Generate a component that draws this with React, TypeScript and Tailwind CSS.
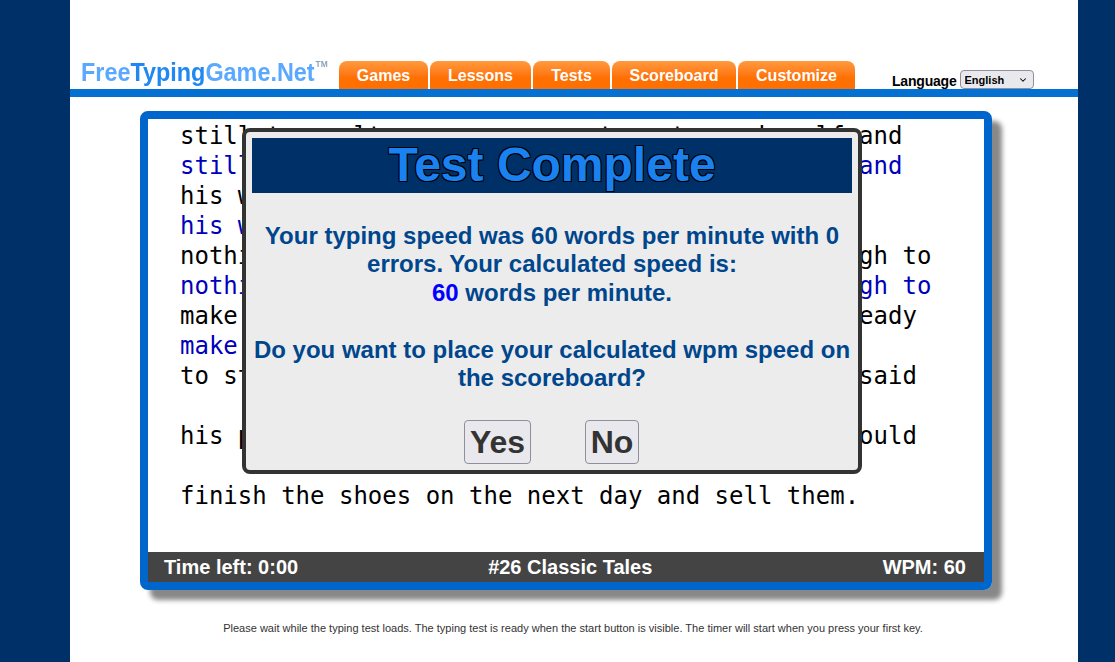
import { ChevronDown } from "lucide-react";

const TABS = [
  { label: "Games", width: "w-[89px]" },
  { label: "Lessons", width: "w-[101px]" },
  { label: "Tests", width: "w-[77px]" },
  { label: "Scoreboard", width: "w-[124px]" },
  { label: "Customize", width: "w-[117px]" },
];

// the dialog hides the middle of most rows, only the ends show
const ROWS = [
  { text: "still to smelt a sum we can at on to seek self and", typed: "same" },
  { text: "his wife had nothing left in the house", typed: "same" },
  { text: "nothing left in the world but this leather enough to", typed: "same" },
  { text: "make one pair of shoes. Then he cut them out, ready", typed: "make one pair of shoes. Then he cut them out," },
  { text: "to start on them the next morning, and then he said", typed: "" },
  { text: "his prayers and went to bed, thinking that he would", typed: "" },
];

const Header = () => {
  return (
    <div className="flex h-[89px] items-end">
      <div className="ml-[11px] w-[258px]">
        <div className="flex origin-left scale-x-[0.936] items-start pb-[3px] text-[25px] leading-[28px] font-bold whitespace-nowrap text-[#5aa9ff] [filter:blur(0.4px)]">
          <span>
            Free<span className="text-[#2088f2]">Typing</span>Game.Net
          </span>
          <span className="ml-[1px] pt-[1px] text-[9px] leading-[10px] text-[#8fa3b8]">TM</span>
        </div>
      </div>
      <div className="flex gap-[2px]">
        {TABS.map((tab) => (
          <div
            key={tab.label}
            className={`${tab.width} flex h-[28px] items-center justify-center rounded-t-[8px] bg-gradient-to-b from-[#ff9a3c] to-[#ff7000] to-[60%] pt-[2px] text-[16px] font-bold text-white`}
          >
            {tab.label}
          </div>
        ))}
      </div>
      <div className="ml-[37px] flex items-end">
        <span className="relative top-[1px] text-[14px] leading-[17px] font-bold tracking-[-0.2px] text-black">
          Language
        </span>
        <div className="relative ml-[3px] h-[19px] w-[74px]">
          <select className="block h-full w-full appearance-none rounded-[4px] border border-[#8f8f9d] bg-[#e9e9ed] pt-[1px] pl-[4px] text-[11px] font-bold text-black">
            <option>English</option>
          </select>
          <ChevronDown className="absolute top-[5px] right-[6px] h-[10px] w-[10px] text-black" strokeWidth={2.5} />
        </div>
      </div>
    </div>
  );
};

const ResultDialog = () => {
  return (
    <div className="absolute top-[9px] left-[94px] h-[346px] w-[620px] rounded-[8px] border-4 border-[#333333] bg-[#ececec] p-[6px] text-center">
      <div className="h-[55px] bg-[#003068] text-[48px] leading-[53px] font-bold text-[#1a82f0] [text-shadow:-1px_-1px_0_#000,1px_-1px_0_#000,-1px_1px_0_#000,1px_1px_0_#000]">
        Test Complete
      </div>
      <div className="mt-[28.9px] text-[24px] leading-[28.5px] font-bold text-[#00468c]">
        Your typing speed was 60 words per minute with 0 errors. Your calculated speed is:
        <br />
        <span className="text-[#0000ff]">60</span> words per minute.
        <br />
        <br />
        Do you want to place your calculated wpm speed on the scoreboard?
      </div>
      <div className="mt-[27.1px] flex justify-center gap-[54px] pr-[1px]">
        <button className="h-[44px] w-[67px] rounded-[4px] border border-[#8f8f9d] bg-[#e9e9ed] pt-[1px] text-[32px] leading-[32px] font-bold text-[#333333]">
          Yes
        </button>
        <button className="h-[44px] w-[54px] rounded-[4px] border border-[#8f8f9d] bg-[#e9e9ed] pt-[1px] text-[32px] leading-[32px] font-bold text-[#333333]">
          No
        </button>
      </div>
    </div>
  );
};

const TypingPanel = () => {
  return (
    <div className="relative mt-[14px] ml-[70px] flex h-[479px] w-[852px] flex-col rounded-[8px] border-8 border-[#0066cc] shadow-[10px_10px_5px_#888888]">
      <div className="flex-1 pt-[2px] pl-[32px] font-['DejaVu_Sans_Mono',monospace] text-[24px] leading-[30px] whitespace-pre">
        {ROWS.map((row) => (
          <div key={row.text}>
            <div className="h-[30px] text-black">{row.text}</div>
            <div className="h-[30px] text-[#0000bb]">
              {row.typed === "same" ? row.text : row.typed}
            </div>
          </div>
        ))}
        <div className="h-[30px] text-black">finish the shoes on the next day and sell them.</div>
      </div>
      <div className="flex h-[30px] items-center bg-[#444444] px-[16px] text-[20px] font-bold text-white">
        <span>Time left: 0:00</span>
        <span className="ml-[190px]">#26 Classic Tales</span>
        <span className="mr-[2px] ml-auto">WPM: 60</span>
      </div>
      <ResultDialog />
    </div>
  );
};

export default function App() {
  return (
    <div className="h-[662px] overflow-hidden bg-[#003068] pl-[70px] font-['Liberation_Sans',Arial,sans-serif]">
      <div className="h-full w-[1008px] bg-white">
        <Header />
        <div className="h-[8px] bg-[#0471d2]" />
        <TypingPanel />
        <p className="mt-[32px] pr-[2px] text-center text-[11px] leading-[13px] tracking-[0.01px] text-[#333333]">
          Please wait while the typing test loads. The typing test is ready when the start button is visible. The timer will start when you press your first key.
        </p>
      </div>
    </div>
  );
}
